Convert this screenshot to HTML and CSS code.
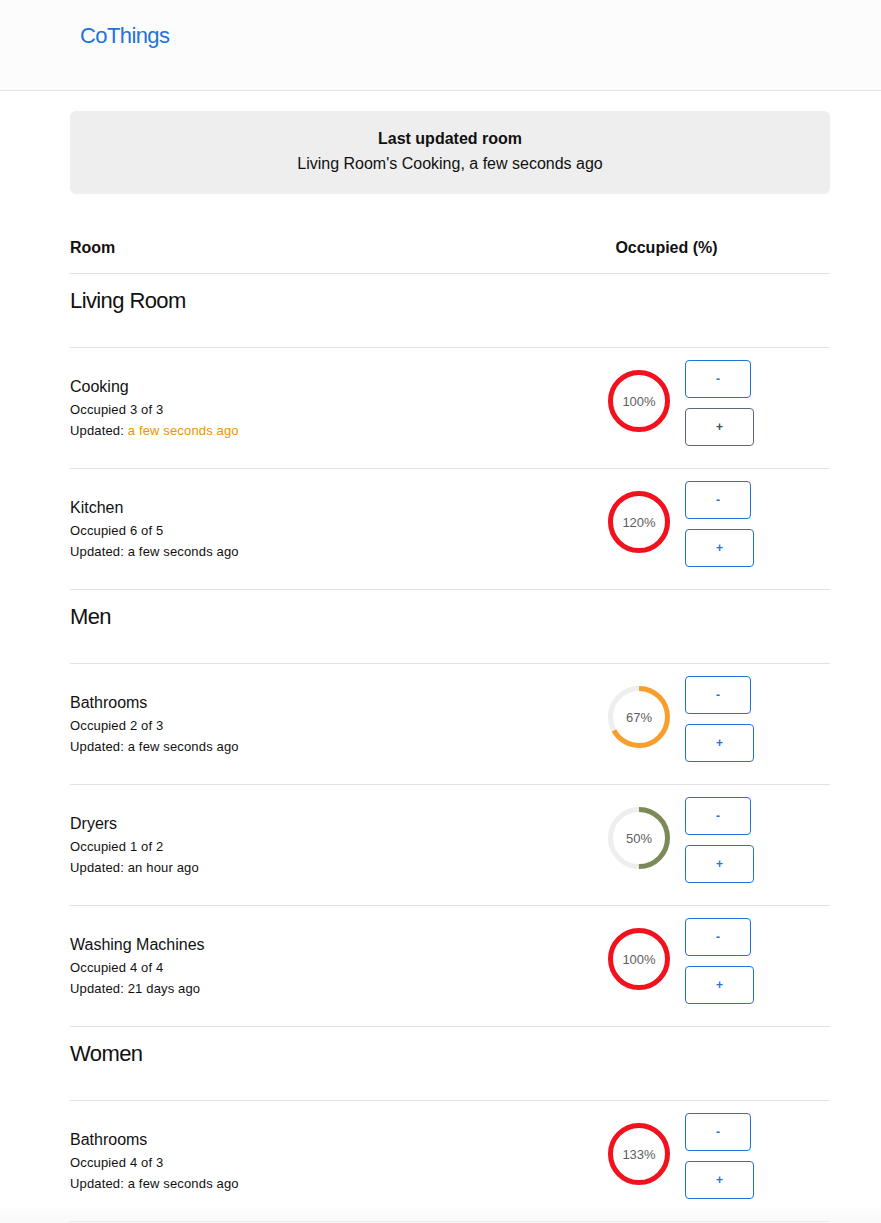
FILE: index.html
```html
<!DOCTYPE html>
<html lang="en">
<head>
<meta charset="utf-8">
<title>CoThings</title>
<link rel="stylesheet" href="styles.css">
</head>
<body>
<header class="topbar">
  <a class="logo" href="#">CoThings</a>
</header>
<main class="container">
  <section class="card">
    <div class="card-title">Last updated room</div>
    <div class="card-sub">Living Room's Cooking, a few seconds ago</div>
  </section>

  <div class="table">
    <div class="thead">
      <div class="th">Room</div>
      <div class="th th-center">Occupied (%)</div>
    </div>

    <div class="group">Living Room</div>

    <div class="row">
      <div class="info">
        <div class="name">Cooking</div>
        <div class="meta">Occupied 3 of 3</div>
        <div class="meta">Updated: <span class="recent">a few seconds ago</span></div>
      </div>
      <div class="occ">
        <div class="gauge">
          <svg viewBox="0 0 62 62" width="62" height="62"><circle class="track" cx="31" cy="31" r="28.5"/><circle class="bar red" cx="31" cy="31" r="28.5" stroke-dasharray="180 180"/></svg>
          <span class="pct">100%</span>
        </div>
        <div class="btns">
          <button class="btn">-</button>
          <button class="btn btn-focus">+</button>
        </div>
      </div>
    </div>

    <div class="row">
      <div class="info">
        <div class="name">Kitchen</div>
        <div class="meta">Occupied 6 of 5</div>
        <div class="meta">Updated: a few seconds ago</div>
      </div>
      <div class="occ">
        <div class="gauge">
          <svg viewBox="0 0 62 62" width="62" height="62"><circle class="track" cx="31" cy="31" r="28.5"/><circle class="bar red" cx="31" cy="31" r="28.5" stroke-dasharray="180 180"/></svg>
          <span class="pct">120%</span>
        </div>
        <div class="btns">
          <button class="btn">-</button>
          <button class="btn">+</button>
        </div>
      </div>
    </div>

    <div class="group">Men</div>

    <div class="row">
      <div class="info">
        <div class="name">Bathrooms</div>
        <div class="meta">Occupied 2 of 3</div>
        <div class="meta">Updated: a few seconds ago</div>
      </div>
      <div class="occ">
        <div class="gauge">
          <svg viewBox="0 0 62 62" width="62" height="62"><circle class="track" cx="31" cy="31" r="28.5"/><circle class="bar orange" cx="31" cy="31" r="28.5" stroke-dasharray="120 180"/></svg>
          <span class="pct">67%</span>
        </div>
        <div class="btns">
          <button class="btn">-</button>
          <button class="btn">+</button>
        </div>
      </div>
    </div>

    <div class="row">
      <div class="info">
        <div class="name">Dryers</div>
        <div class="meta">Occupied 1 of 2</div>
        <div class="meta">Updated: an hour ago</div>
      </div>
      <div class="occ">
        <div class="gauge">
          <svg viewBox="0 0 62 62" width="62" height="62"><circle class="track" cx="31" cy="31" r="28.5"/><circle class="bar green" cx="31" cy="31" r="28.5" stroke-dasharray="89.5 180"/></svg>
          <span class="pct">50%</span>
        </div>
        <div class="btns">
          <button class="btn">-</button>
          <button class="btn">+</button>
        </div>
      </div>
    </div>

    <div class="row">
      <div class="info">
        <div class="name">Washing Machines</div>
        <div class="meta">Occupied 4 of 4</div>
        <div class="meta">Updated: 21 days ago</div>
      </div>
      <div class="occ">
        <div class="gauge">
          <svg viewBox="0 0 62 62" width="62" height="62"><circle class="track" cx="31" cy="31" r="28.5"/><circle class="bar red" cx="31" cy="31" r="28.5" stroke-dasharray="180 180"/></svg>
          <span class="pct">100%</span>
        </div>
        <div class="btns">
          <button class="btn">-</button>
          <button class="btn">+</button>
        </div>
      </div>
    </div>

    <div class="group">Women</div>

    <div class="row">
      <div class="info">
        <div class="name">Bathrooms</div>
        <div class="meta">Occupied 4 of 3</div>
        <div class="meta">Updated: a few seconds ago</div>
      </div>
      <div class="occ">
        <div class="gauge">
          <svg viewBox="0 0 62 62" width="62" height="62"><circle class="track" cx="31" cy="31" r="28.5"/><circle class="bar red" cx="31" cy="31" r="28.5" stroke-dasharray="180 180"/></svg>
          <span class="pct">133%</span>
        </div>
        <div class="btns">
          <button class="btn">-</button>
          <button class="btn">+</button>
        </div>
      </div>
    </div>
  </div>
</main>
<div class="bottom-fade"></div>
</body>
</html>
```

FILE: styles.css
```css
* { box-sizing: border-box; }

html, body {
  margin: 0;
  padding: 0;
  background: #ffffff;
}

body {
  font-family: "Liberation Sans", Arial, sans-serif;
  color: #111111;
}

.topbar {
  height: 91px;
  background: #fcfcfc;
  border-bottom: 1px solid #e6e6e6;
  padding: 22px 0 0 80px;
}

.logo {
  font-size: 22px;
  line-height: 28px;
  color: #1f74d8;
  text-decoration: none;
  letter-spacing: -0.6px;
}

.container {
  width: 760px;
  margin: 0 0 0 70px;
  padding-top: 20px;
}

.card {
  background: #eeeeee;
  border-radius: 6px;
  box-shadow: 0 1px 1px rgba(0, 0, 0, 0.07);
  padding: 16px 16px 17px;
  text-align: center;
}

.card-title {
  font-size: 16px;
  font-weight: bold;
  line-height: 24px;
}

.card-sub {
  font-size: 16px;
  line-height: 25px;
}

.table {
  margin-top: 30px;
}

.thead {
  display: grid;
  grid-template-columns: 1fr 327px;
  border-bottom: 1px solid #e2e2e2;
  padding: 13px 0 13px;
}

.th {
  font-size: 16px;
  font-weight: bold;
  line-height: 24px;
}

.th-center {
  text-align: center;
}

.group {
  font-size: 22px;
  line-height: 26px;
  padding: 14px 0 33px;
  border-bottom: 1px solid #e2e2e2;
  letter-spacing: -0.6px;
}

.row {
  display: grid;
  grid-template-columns: 1fr 327px;
  min-height: 121px;
  border-bottom: 1px solid #e2e2e2;
}

.info {
  align-self: center;
}

.name {
  font-size: 16px;
  line-height: 22px;
  margin-bottom: 1px;
}

.meta {
  font-size: 13px;
  line-height: 21px;
  letter-spacing: 0.15px;
}

.recent {
  color: #f39200;
}

.occ {
  display: flex;
  align-items: center;
  padding: 12px 0 22px 105px;
}

.gauge {
  position: relative;
  width: 62px;
  height: 62px;
  margin: -4px 15px 0 0;
}

.gauge svg {
  display: block;
  transform: rotate(-90deg);
}

.track {
  fill: none;
  stroke: #eeeeee;
  stroke-width: 5;
}

.bar {
  fill: none;
  stroke-width: 5;
}

.red { stroke: #f2111c; }
.orange { stroke: #f6a02b; }
.green { stroke: #7a8b59; }

.pct {
  position: absolute;
  inset: 0;
  display: flex;
  align-items: center;
  justify-content: center;
  font-size: 13px;
  color: #606060;
}

.btns {
  display: flex;
  flex-direction: column;
  align-items: flex-start;
  gap: 10px;
}

.btn {
  font-family: "Liberation Sans", Arial, sans-serif;
  font-size: 12px;
  font-weight: bold;
  height: 38px;
  padding: 0 30px;
  background: #ffffff;
  color: #1f74d8;
  border: 1px solid #1f74d8;
  border-radius: 4px;
  line-height: 1;
}

.btn-focus {
  color: #444c56;
  border-color: #5d6876;
}

.bottom-fade {
  position: fixed;
  left: 0;
  right: 0;
  bottom: 0;
  height: 20px;
  background: linear-gradient(to bottom, rgba(245, 245, 245, 0), rgba(245, 245, 245, 0.6));
  pointer-events: none;
}
```
